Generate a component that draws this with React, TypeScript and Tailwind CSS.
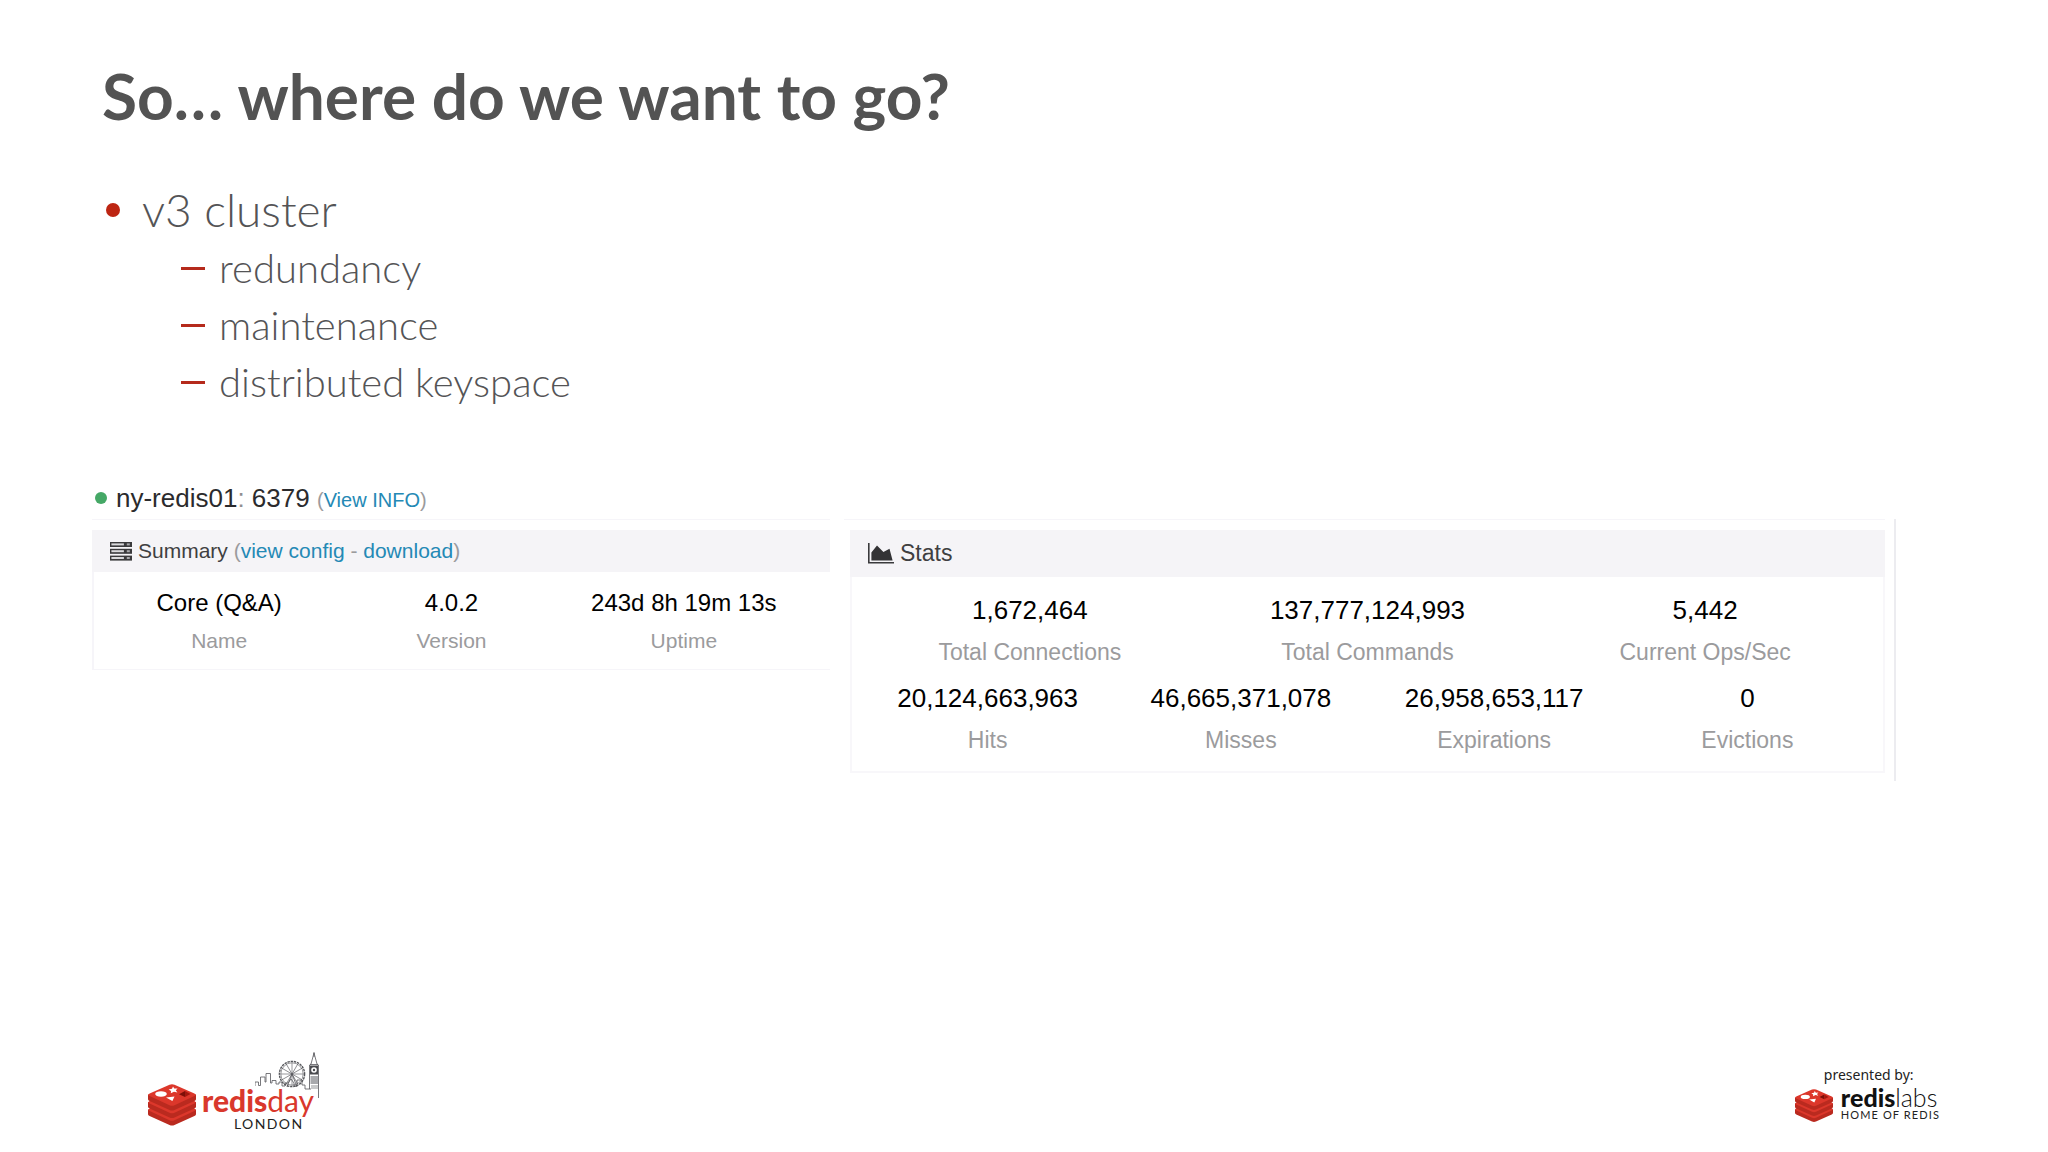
import type { ReactNode } from "react";

type Stat = { value: string; label: string };

const goals = ["redundancy", "maintenance", "distributed keyspace"];

const summary: Stat[] = [
  { value: "Core (Q&A)", label: "Name" },
  { value: "4.0.2", label: "Version" },
  { value: "243d 8h 19m 13s", label: "Uptime" },
];

const totals: Stat[] = [
  { value: "1,672,464", label: "Total Connections" },
  { value: "137,777,124,993", label: "Total Commands" },
  { value: "5,442", label: "Current Ops/Sec" },
];

const keys: Stat[] = [
  { value: "20,124,663,963", label: "Hits" },
  { value: "46,665,371,078", label: "Misses" },
  { value: "26,958,653,117", label: "Expirations" },
  { value: "0", label: "Evictions" },
];

function ServerIcon() {
  return (
    <svg width="22" height="19" viewBox="0 0 22 19" aria-hidden="true">
      {[0, 6.8, 13.6].map((y) => (
        <g key={y}>
          <rect x="0" y={y} width="22" height="5" fill="#3a3a3c" />
          <rect x="1.4" y={y + 1.4} width="12.5" height="2" fill="#d9d9dc" />
          <rect x="16.8" y={y + 1.4} width="3" height="2" fill="#a8a8ac" />
        </g>
      ))}
    </svg>
  );
}

function AreaChartIcon() {
  return (
    <svg width="26" height="21" viewBox="0 0 26 21" aria-hidden="true">
      <path d="M0.8 0V19.8H26" fill="none" stroke="#3a3a3c" strokeWidth="1.6" />
      <path d="M3.4 17.6V9.5L9 2.4L15.4 9L21.5 5.8L24.6 17.6Z" fill="#333335" />
    </svg>
  );
}

function RedisCube({ className }: { className: string }) {
  return (
    <svg viewBox="0 0 48 42" className={className} aria-hidden="true">
      {[15, 7.5, 0].map((y) => (
        <g key={y} transform={`translate(0 ${y})`}>
          <path d="M0 10.6V15.2Q0 16.4 1.6 17.1L21.5 26Q24 27.2 26.5 26L46.4 17.1Q48 16.4 48 15.2V10.6Z" fill="#ba2a1f" />
          <path d="M1.6 9.4L21.5 0.7Q24 -0.3 26.5 0.7L46.4 9.4Q49 10.7 46.4 12L26.5 21.3Q24 22.4 21.5 21.3L1.6 12Q-1 10.7 1.6 9.4Z" fill="#dc372b" />
        </g>
      ))}
      <path d="M25 2.6L26.3 4.6L29.6 4.4L27.8 6.2L29.4 8.4L26 7.7L22.8 9.2L23 7L20.6 5.4L24 4.8Z" fill="#fff" />
      <ellipse cx="13" cy="10" rx="5.8" ry="2.7" fill="#fff" />
      <path d="M18 13.4L26.5 12.4L24.4 17Z" fill="#fff" />
      <path d="M31 10.2L37 7V13Z" fill="#7d1009" />
      <path d="M37 7L42.5 10L37 13Z" fill="#a3180f" />
    </svg>
  );
}

function Skyline({ className }: { className: string }) {
  const spokes = [0, 30, 60, 90, 120, 150];
  return (
    <svg width="65" height="47" viewBox="0 0 65 47" className={className} aria-hidden="true">
      <g fill="none" stroke="#55565a" strokeWidth="0.8">
        <path d="M0 34V30H3.5V33.5H5.5V25H10V30H11V21.5H15.5V31H17V28.5H21V32H24V30H27V34H30V31H33L36 27L39 31V34H42V28H47V33H50V37H56" />
        <circle cx="37" cy="22" r="12.6" strokeWidth="1.4" strokeDasharray="2.4 0.8" />
        <circle cx="37" cy="22" r="11.2" strokeWidth="0.6" />
        {spokes.map((a) => (
          <path key={a} d="M25.5 22H48.5" strokeWidth="0.6" transform={`rotate(${a} 37 22)`} />
        ))}
        <path d="M37 22L32 35M37 22L42 35" />
        <path d="M54.5 37V13L56 12L59 1L62 12L63.5 13V46" />
        <path d="M59 0V5M55 12.5H63" />
      </g>
      <rect x="55" y="13.5" width="8" height="9" fill="#4a4b4f" />
      <circle cx="59" cy="18" r="2.8" fill="#fff" />
      <circle cx="59" cy="18" r="1.2" fill="#4a4b4f" />
      <rect x="55.5" y="24" width="7.5" height="8" fill="#a9aaad" />
      <path d="M56 34H63M56 36H63" stroke="#77787c" strokeWidth="0.8" />
    </svg>
  );
}

function StatRow({ stats, large = false }: { stats: Stat[]; large?: boolean }) {
  return (
    <dl className="grid auto-cols-fr grid-flow-col text-center">
      {stats.map((s) => (
        <div key={s.label} className="flex flex-col-reverse gap-1.5">
          <dt className={large ? "text-[23px] leading-8 text-[#9b9b9d]" : "text-[21px] leading-8 text-[#9b9b9d]"}>
            {s.label}
          </dt>
          <dd className={large ? "text-[26px] leading-10 text-black" : "text-2xl leading-8 text-black"}>{s.value}</dd>
        </div>
      ))}
    </dl>
  );
}

function Link({ children }: { children: ReactNode }) {
  return (
    <a href="#" className="text-[#2489b5]">
      {children}
    </a>
  );
}

export default function App() {
  return (
    <main className="flex min-h-screen flex-col bg-white pt-[60px] pb-5 font-['Lato',sans-serif] text-[#545456]">
      <h1 className="px-[102px] text-[64px] leading-[72px] font-bold text-[#535353]">So… where do we want to go?</h1>

      <section className="mt-12 px-[106px]">
        <div className="flex items-center gap-[22px] text-[46px] leading-[60px] font-light">
          <span className="size-3.5 rounded-full bg-[#bd2512]" />
          v3 cluster
        </div>
        <ul className="pl-[75px] text-[40px] leading-[57px] font-light">
          {goals.map((goal) => (
            <li key={goal} className="flex items-center gap-3.5">
              <span className="h-[3px] w-6 bg-[#b52a1c]" />
              {goal}
            </li>
          ))}
        </ul>
      </section>

      <section className="mt-[67px] pr-[152px] pl-[92px] font-['Liberation_Sans',Arial,sans-serif]">
        <h2 className="flex items-center pb-px pl-[3px] text-[26px] leading-10 text-[#2b2b2d]">
          <span className="mr-[9px] size-3 rounded-full bg-[#45a866]" />
          <span>
            ny-redis01<span className="text-[#8f8f91]">:</span> 6379{" "}
            <span className="text-[20px] leading-5 text-[#9b9b9d]">
              (<Link>View INFO</Link>)
            </span>
          </span>
        </h2>

        <div className="flex items-start gap-3.5">
          <div className="flex-[738] border-t border-[#f6f5f9] pt-2.5">
            <h3 className="flex h-[42px] items-center gap-1.5 bg-[#f5f4f7] pl-[18px] text-[21px] text-[#3f3f41]">
              <ServerIcon />
              <span>
                Summary{" "}
                <span className="text-[#9b9b9d]">
                  (<Link>view config</Link> - <Link>download</Link>)
                </span>
              </span>
            </h3>
            <div className="border-b border-l-2 border-[#f6f5f9] pt-[15px] pr-[30px] pb-3 pl-[9px]">
              <StatRow stats={summary} />
            </div>
          </div>

          <div className="flex-[1041] border-r-2 border-[#ececf0] pr-[9px] pb-2">
            <div className="border-t border-[#f6f5f9] pt-2.5 pl-1.5">
              <h3 className="flex h-[47px] items-center gap-1.5 bg-[#f5f4f7] pl-[18px] text-[23px] text-[#3f3f41]">
                <AreaChartIcon />
                Stats
              </h3>
              <div className="flex flex-col gap-2.5 border-x-2 border-b-2 border-[#f8f7fa] px-[9px] pt-[13px] pb-[15px]">
                <StatRow stats={totals} large />
                <StatRow stats={keys} large />
              </div>
            </div>
          </div>
        </div>
      </section>

      <footer className="mt-auto flex items-end justify-between pr-[108px] pl-[148px]">
        <div className="relative flex items-start gap-1.5">
          <RedisCube className="w-12" />
          <div>
            <p className="text-[30px] leading-8 text-[#d9382c]">
              <span className="font-black">redis</span>day
            </p>
            <p className="pl-8 text-[14px] leading-4 tracking-widest text-[#222]">LONDON</p>
          </div>
          <Skyline className="absolute -top-8 left-[107px]" />
        </div>

        <div className="pb-2.5">
          <p className="pl-[29px] font-['Noto_Sans',sans-serif] text-[14px] leading-5 text-[#222]">presented by:</p>
          <div className="flex items-start gap-2">
            <RedisCube className="mt-1 w-[38px]" />
            <div>
              <p className="text-[25px] leading-6 text-[#111]">
                <span className="font-black">redis</span>
                <span className="font-light">labs</span>
              </p>
              <p className="text-[11px] leading-3 tracking-widest text-[#222]">HOME OF REDIS</p>
            </div>
          </div>
        </div>
      </footer>
    </main>
  );
}
